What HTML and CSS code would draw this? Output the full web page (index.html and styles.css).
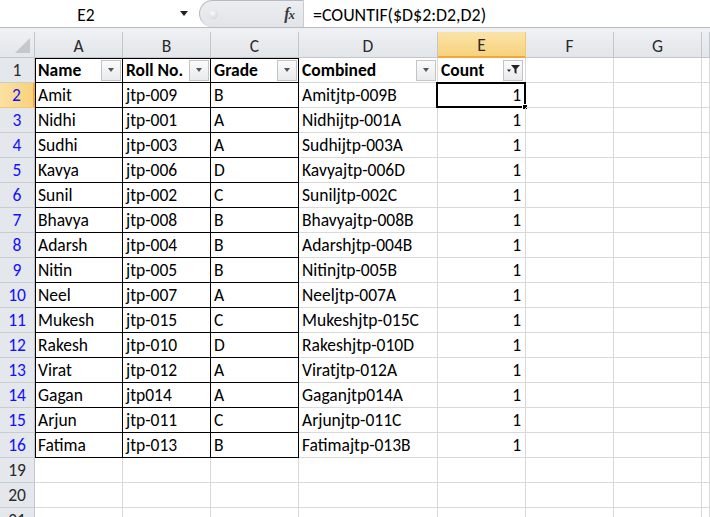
FILE: index.html
```html
<!DOCTYPE html>
<html>
<head>
<meta charset="utf-8">
<link rel="stylesheet" href="styles.css">
</head>
<body>
<div class="fbar">
  <div class="namebox"><span class="nb-text">E2</span><span class="nb-arrow"></span></div>
  <div class="pill"><span class="pill-dot"></span><span class="fx">f<span class="fx-x">x</span></span></div>
  <div class="formula">=COUNTIF($D$2:D2,D2)</div>
</div>
<div class="gap"></div>
<div class="sheet">
  <div class="row hdr">
    <div class="corner"><span class="corner-tri"></span></div>
    <div class="ch">A</div><div class="ch">B</div><div class="ch">C</div><div class="ch">D</div><div class="ch ch-sel">E</div><div class="ch">F</div><div class="ch">G</div><div class="ch ch-last"></div>
  </div>
  <div class="row">
    <div class="rh rh-dark">1</div>
    <div class="c th bk bl bt">Name<span class="fb"><span class="tri"></span></span></div>
    <div class="c th bk bt">Roll No.<span class="fb"><span class="tri"></span></span></div>
    <div class="c th bk bt">Grade<span class="fb"><span class="tri"></span></span></div>
    <div class="c th">Combined<span class="fb"><span class="tri"></span></span></div>
    <div class="c th">Count<span class="fb fb-on"><svg class="funnel" width="14" height="12" viewBox="0 0 14 12"><path d="M5 1h9l-3.5 4v5l-2-1.5V5z" fill="#222"/><path d="M1 5.5h4l-2 2.5z" fill="#222"/></svg></span></div>
    <div class="c"></div><div class="c"></div><div class="c"></div>
  </div>
  <div class="row">
    <div class="rh rh-sel">2</div>
    <div class="c bk bl">Amit</div><div class="c bk">jtp-009</div><div class="c bk">B</div><div class="c">Amitjtp-009B</div>
    <div class="c num active">1<span class="selbox"><span class="handle"></span></span></div>
    <div class="c"></div><div class="c"></div><div class="c"></div>
  </div>
  <div class="row"><div class="rh">3</div><div class="c bk bl">Nidhi</div><div class="c bk">jtp-001</div><div class="c bk">A</div><div class="c">Nidhijtp-001A</div><div class="c num">1</div><div class="c"></div><div class="c"></div><div class="c"></div></div>
  <div class="row"><div class="rh">4</div><div class="c bk bl">Sudhi</div><div class="c bk">jtp-003</div><div class="c bk">A</div><div class="c">Sudhijtp-003A</div><div class="c num">1</div><div class="c"></div><div class="c"></div><div class="c"></div></div>
  <div class="row"><div class="rh">5</div><div class="c bk bl">Kavya</div><div class="c bk">jtp-006</div><div class="c bk">D</div><div class="c">Kavyajtp-006D</div><div class="c num">1</div><div class="c"></div><div class="c"></div><div class="c"></div></div>
  <div class="row"><div class="rh">6</div><div class="c bk bl">Sunil</div><div class="c bk">jtp-002</div><div class="c bk">C</div><div class="c">Suniljtp-002C</div><div class="c num">1</div><div class="c"></div><div class="c"></div><div class="c"></div></div>
  <div class="row"><div class="rh">7</div><div class="c bk bl">Bhavya</div><div class="c bk">jtp-008</div><div class="c bk">B</div><div class="c">Bhavyajtp-008B</div><div class="c num">1</div><div class="c"></div><div class="c"></div><div class="c"></div></div>
  <div class="row"><div class="rh">8</div><div class="c bk bl">Adarsh</div><div class="c bk">jtp-004</div><div class="c bk">B</div><div class="c">Adarshjtp-004B</div><div class="c num">1</div><div class="c"></div><div class="c"></div><div class="c"></div></div>
  <div class="row"><div class="rh">9</div><div class="c bk bl">Nitin</div><div class="c bk">jtp-005</div><div class="c bk">B</div><div class="c">Nitinjtp-005B</div><div class="c num">1</div><div class="c"></div><div class="c"></div><div class="c"></div></div>
  <div class="row"><div class="rh">10</div><div class="c bk bl">Neel</div><div class="c bk">jtp-007</div><div class="c bk">A</div><div class="c">Neeljtp-007A</div><div class="c num">1</div><div class="c"></div><div class="c"></div><div class="c"></div></div>
  <div class="row"><div class="rh">11</div><div class="c bk bl">Mukesh</div><div class="c bk">jtp-015</div><div class="c bk">C</div><div class="c">Mukeshjtp-015C</div><div class="c num">1</div><div class="c"></div><div class="c"></div><div class="c"></div></div>
  <div class="row"><div class="rh">12</div><div class="c bk bl">Rakesh</div><div class="c bk">jtp-010</div><div class="c bk">D</div><div class="c">Rakeshjtp-010D</div><div class="c num">1</div><div class="c"></div><div class="c"></div><div class="c"></div></div>
  <div class="row"><div class="rh">13</div><div class="c bk bl">Virat</div><div class="c bk">jtp-012</div><div class="c bk">A</div><div class="c">Viratjtp-012A</div><div class="c num">1</div><div class="c"></div><div class="c"></div><div class="c"></div></div>
  <div class="row"><div class="rh">14</div><div class="c bk bl">Gagan</div><div class="c bk">jtp014</div><div class="c bk">A</div><div class="c">Gaganjtp014A</div><div class="c num">1</div><div class="c"></div><div class="c"></div><div class="c"></div></div>
  <div class="row"><div class="rh">15</div><div class="c bk bl">Arjun</div><div class="c bk">jtp-011</div><div class="c bk">C</div><div class="c">Arjunjtp-011C</div><div class="c num">1</div><div class="c"></div><div class="c"></div><div class="c"></div></div>
  <div class="row"><div class="rh">16</div><div class="c bk bl">Fatima</div><div class="c bk">jtp-013</div><div class="c bk">B</div><div class="c">Fatimajtp-013B</div><div class="c num">1</div><div class="c"></div><div class="c"></div><div class="c"></div></div>
  <div class="row"><div class="rh rh-dark">19</div><div class="c"></div><div class="c"></div><div class="c"></div><div class="c"></div><div class="c"></div><div class="c"></div><div class="c"></div><div class="c"></div></div>
  <div class="row"><div class="rh rh-dark">20</div><div class="c"></div><div class="c"></div><div class="c"></div><div class="c"></div><div class="c"></div><div class="c"></div><div class="c"></div><div class="c"></div></div>
  <div class="row"><div class="rh rh-dark">21</div><div class="c"></div><div class="c"></div><div class="c"></div><div class="c"></div><div class="c"></div><div class="c"></div><div class="c"></div><div class="c"></div></div>
</div>
</body>
</html>
```

FILE: styles.css
```css
* { box-sizing: border-box; }
html, body { margin: 0; padding: 0; background: #fff; overflow: hidden; }
body {
  width: 710px; height: 517px;
  font-family: Carlito, Lato, "Liberation Sans", sans-serif;
  font-size: 17.5px; color: #000;
}

/* formula bar */
.fbar {
  display: flex; height: 28px;
  border-bottom: 1px solid #b9bdc3;
  background: #fff;
}
.namebox {
  width: 199px; display: flex; align-items: center; position: relative;
}
.nb-text { width: 172px; text-align: center; padding-top: 2px; }
.nb-arrow {
  width: 0; height: 0; margin-left: 8px;
  border-left: 4px solid transparent; border-right: 4px solid transparent;
  border-top: 5px solid #222;
}
.pill {
  width: 105px; height: 27px; display: flex; align-items: center;
  background: linear-gradient(#eceef1, #e1e4e8);
  border: 1px solid #b6bac0; border-right-color: #c9ccd1; border-bottom: none;
  border-radius: 14px 0 0 14px;
  padding-left: 9px; padding-right: 9px;
}
.pill-dot {
  width: 9px; height: 9px; border-radius: 50%;
  background: radial-gradient(circle at 40% 35%, #fafafa, #c9ccd0);
}
.fx {
  margin-left: auto; font-family: "Liberation Serif", serif; font-style: italic;
  font-weight: bold; font-size: 16px; color: #3a3a3a; letter-spacing: -1px;
}
.fx-x { font-size: 13px; }
.formula {
  flex: 1; display: flex; align-items: center; padding-left: 9px; padding-top: 3px;
  font-size: 17.9px;
}

.gap { height: 4px; background: #eef0f3; }

/* sheet */
.row {
  display: grid;
  grid-template-columns: 35px 88px 88px 88px 139px 88px 88px 88px 1fr;
  height: 25px;
}
.row.hdr { height: 26px; }
.corner {
  background: linear-gradient(#eef0f3, #e3e6ea);
  border-right: 1px solid #c3c7cd; border-bottom: 1px solid #c3c7cd;
  position: relative;
}
.corner-tri {
  position: absolute; right: 4px; bottom: 4px; width: 0; height: 0;
  border-left: 15px solid transparent; border-bottom: 15px solid #c4c8cd;
}
.ch {
  background: linear-gradient(#eef0f3, #e2e5e9);
  border-right: 1px solid #c3c7cd; border-bottom: 1px solid #c3c7cd;
  display: flex; align-items: center; justify-content: center;
  color: #2b2b2b; padding-top: 2px;
}
.ch-sel {
  background: linear-gradient(#fbe3a8, #f7d27d);
  border-right-color: #f2c86e; border-bottom: 2px solid #f0a83c;
}
.rh {
  background: #e4e7eb;
  border-right: 1px solid #c3c7cd; border-bottom: 1px solid #c9cdd2;
  display: flex; align-items: flex-end; justify-content: center;
  color: #1010ff; padding-bottom: 1px;
}
.rh-dark { color: #2b2b2b; }
.rh-sel {
  background: linear-gradient(90deg, #fbe1a2, #f7d27d);
  border-right: 2px solid #f0a83c; border-bottom-color: #f2c86e;
}
.c {
  border-right: 1px solid #d9d9d9; border-bottom: 1px solid #d9d9d9;
  display: flex; align-items: flex-end;
  padding: 0 3px 1px 3px; white-space: nowrap; overflow: visible; position: relative;
}
.th { font-weight: bold; padding-right: 1px; }
.bk { border-right-color: #000; border-bottom-color: #000; }
.bl { box-shadow: inset 1px 0 0 #000; }
.bl.bt { box-shadow: inset 1px 1px 0 #000; }
.bt { box-shadow: inset 0 1px 0 #000; }
.num { justify-content: flex-end; padding-right: 4px; }

.fb {
  margin-left: auto; align-self: center;
  width: 20px; height: 21px;
  border: 1px solid #c2c4c7;
  background: linear-gradient(#fbfbfb, #e9eaec);
  display: flex; align-items: center; justify-content: center;
  margin-top: 1px;
}
.tri {
  width: 0; height: 0;
  border-left: 3.5px solid transparent; border-right: 3.5px solid transparent;
  border-top: 4px solid #555;
}
.fb-on { margin-right: 1px; }

.selbox {
  position: absolute; left: -2px; top: -1px; width: 90px; height: 26px;
  border: 2px solid #000; pointer-events: none;
}
.handle {
  position: absolute; right: -4px; bottom: -4px; width: 6px; height: 6px;
  background: #000; border: 1px solid #fff;
}
```
